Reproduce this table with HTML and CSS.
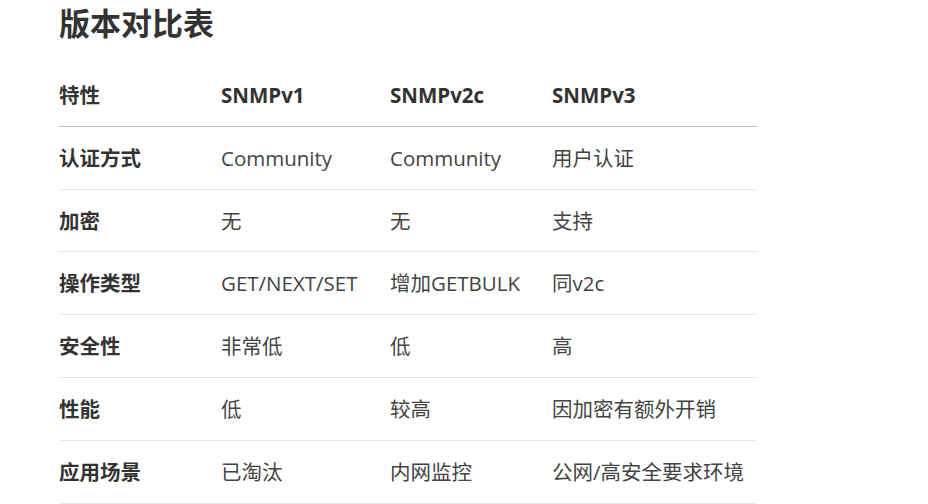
FILE: index.html
```html
<!DOCTYPE html>
<html lang="zh">
<head>
<meta charset="utf-8">
<link rel="stylesheet" href="styles.css">
</head>
<body>
<div class="wrap">
  <h2 class="title">版本对比表</h2>
  <table class="cmp">
    <thead>
      <tr><th class="c1">特性</th><th class="c2">SNMPv1</th><th class="c3">SNMPv2c</th><th class="c4">SNMPv3</th></tr>
    </thead>
    <tbody>
      <tr><th>认证方式</th><td>Community</td><td>Community</td><td>用户认证</td></tr>
      <tr><th>加密</th><td>无</td><td>无</td><td>支持</td></tr>
      <tr><th>操作类型</th><td>GET/NEXT/SET</td><td>增加GETBULK</td><td>同v2c</td></tr>
      <tr><th>安全性</th><td>非常低</td><td>低</td><td>高</td></tr>
      <tr><th>性能</th><td>低</td><td>较高</td><td>因加密有额外开销</td></tr>
      <tr><th>应用场景</th><td>已淘汰</td><td>内网监控</td><td>公网/高安全要求环境</td></tr>
    </tbody>
  </table>
</div>
</body>
</html>
```
FILE: styles.css
```css
html, body {
  margin: 0;
  padding: 0;
  background: #fff;
}
body {
  font-family: "Open Sans", "Noto Sans CJK SC", sans-serif;
  color: #333;
}
.wrap {
  padding-left: 59px;
}
.title {
  margin: 0;
  font-size: 31px;
  line-height: 46px;
  font-weight: 700;
  color: #333;
}
.cmp {
  margin-top: 18px;
  border-collapse: collapse;
  width: 698px;
  font-size: 20.5px;
}
.cmp th, .cmp td {
  text-align: left;
  padding: 17px 0 15px;
  line-height: 29.8px;
  white-space: nowrap;
}
.cmp th {
  font-weight: 700;
  color: #333;
}
.cmp td {
  font-weight: 400;
  color: #444;
}
.cmp thead th {
  border-bottom: 1px solid #bdbdbd;
}
.cmp tbody tr {
  border-bottom: 1px solid #e6e6e6;
}
.c1 { width: 162px; }
.c2 { width: 169px; }
.c3 { width: 162px; }
.c4 { width: 205px; }
```
